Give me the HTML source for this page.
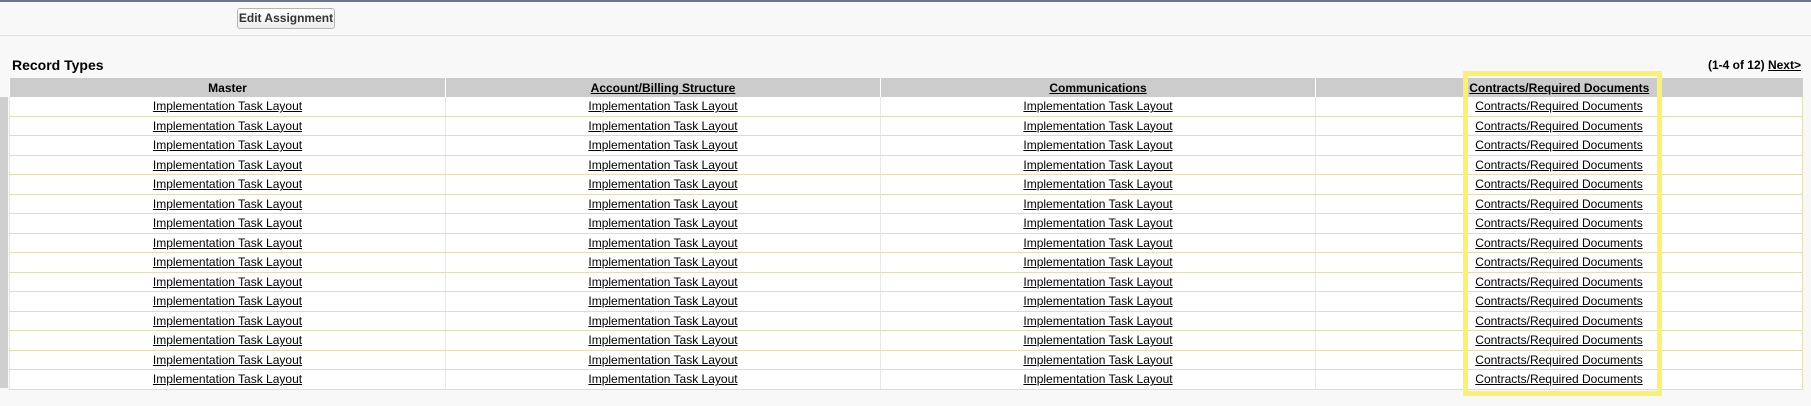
<!DOCTYPE html>
<html><head><style>
body{margin:0;width:1811px;height:406px;background:#f8f8f8;font-family:"Liberation Sans",Arial,sans-serif;position:relative;overflow:hidden;color:#000}
.top{position:absolute;left:0;top:0;width:1811px;height:2px;background:#6b778f}
.btn{position:absolute;left:237px;top:8px;width:98px;height:21px;border:1px solid #b5b5b5;border-radius:3px;background:linear-gradient(#fff,#ededed);font-size:12px;font-weight:bold;color:#333;text-align:center;line-height:19px;box-sizing:border-box;white-space:nowrap}
.sep{position:absolute;left:0;top:35px;width:1811px;height:1px;background:#e0e0e0}
.title{position:absolute;left:12px;top:57px;font-size:14px;font-weight:bold}
.pag{position:absolute;right:10px;top:58px;font-size:12px;font-weight:bold}
.pag u{font-weight:bold}
.strip{position:absolute;left:0;top:97px;width:8px;height:291px;background:#cfcfcf}
table{position:absolute;left:9px;top:78px;width:1793px;border-collapse:collapse;table-layout:fixed;background:#fff}
th{background:#cccccc;height:19px;padding:0;font-size:12px;font-weight:bold;border-left:1px solid #fff;text-align:center}
td{height:18.5px;padding:0;font-size:12px;text-align:center;border-bottom:1px solid #e3deb8;border-left:1px solid #e8e8e8}
tr td:last-child{border-right:1px solid #e3deb8}
a,u{color:#000;text-decoration:underline}
.hl{position:absolute;left:1463px;top:71px;width:199px;height:325px;border:5px solid #fbf26a;box-sizing:border-box}
</style></head><body>
<div class="top"></div>
<div class="btn">Edit Assignment</div>
<div class="sep"></div>
<div class="title">Record Types</div>
<div class="pag">(1-4 of 12) <u>Next&gt;</u></div>
<div class="strip"></div>
<table>
<colgroup><col style="width:436px"><col style="width:435px"><col style="width:435px"><col style="width:487px"></colgroup>
<tr><th>Master</th><th><u>Account/Billing Structure</u></th><th><u>Communications</u></th><th><u>Contracts/Required Documents</u></th></tr>
<tr><td><a>Implementation Task Layout</a></td><td><a>Implementation Task Layout</a></td><td><a>Implementation Task Layout</a></td><td><a>Contracts/Required Documents</a></td></tr>
<tr><td><a>Implementation Task Layout</a></td><td><a>Implementation Task Layout</a></td><td><a>Implementation Task Layout</a></td><td><a>Contracts/Required Documents</a></td></tr>
<tr><td><a>Implementation Task Layout</a></td><td><a>Implementation Task Layout</a></td><td><a>Implementation Task Layout</a></td><td><a>Contracts/Required Documents</a></td></tr>
<tr><td><a>Implementation Task Layout</a></td><td><a>Implementation Task Layout</a></td><td><a>Implementation Task Layout</a></td><td><a>Contracts/Required Documents</a></td></tr>
<tr><td><a>Implementation Task Layout</a></td><td><a>Implementation Task Layout</a></td><td><a>Implementation Task Layout</a></td><td><a>Contracts/Required Documents</a></td></tr>
<tr><td><a>Implementation Task Layout</a></td><td><a>Implementation Task Layout</a></td><td><a>Implementation Task Layout</a></td><td><a>Contracts/Required Documents</a></td></tr>
<tr><td><a>Implementation Task Layout</a></td><td><a>Implementation Task Layout</a></td><td><a>Implementation Task Layout</a></td><td><a>Contracts/Required Documents</a></td></tr>
<tr><td><a>Implementation Task Layout</a></td><td><a>Implementation Task Layout</a></td><td><a>Implementation Task Layout</a></td><td><a>Contracts/Required Documents</a></td></tr>
<tr><td><a>Implementation Task Layout</a></td><td><a>Implementation Task Layout</a></td><td><a>Implementation Task Layout</a></td><td><a>Contracts/Required Documents</a></td></tr>
<tr><td><a>Implementation Task Layout</a></td><td><a>Implementation Task Layout</a></td><td><a>Implementation Task Layout</a></td><td><a>Contracts/Required Documents</a></td></tr>
<tr><td><a>Implementation Task Layout</a></td><td><a>Implementation Task Layout</a></td><td><a>Implementation Task Layout</a></td><td><a>Contracts/Required Documents</a></td></tr>
<tr><td><a>Implementation Task Layout</a></td><td><a>Implementation Task Layout</a></td><td><a>Implementation Task Layout</a></td><td><a>Contracts/Required Documents</a></td></tr>
<tr><td><a>Implementation Task Layout</a></td><td><a>Implementation Task Layout</a></td><td><a>Implementation Task Layout</a></td><td><a>Contracts/Required Documents</a></td></tr>
<tr><td><a>Implementation Task Layout</a></td><td><a>Implementation Task Layout</a></td><td><a>Implementation Task Layout</a></td><td><a>Contracts/Required Documents</a></td></tr>
<tr><td><a>Implementation Task Layout</a></td><td><a>Implementation Task Layout</a></td><td><a>Implementation Task Layout</a></td><td><a>Contracts/Required Documents</a></td></tr>
</table>
<div class="hl"></div>
</body></html>
